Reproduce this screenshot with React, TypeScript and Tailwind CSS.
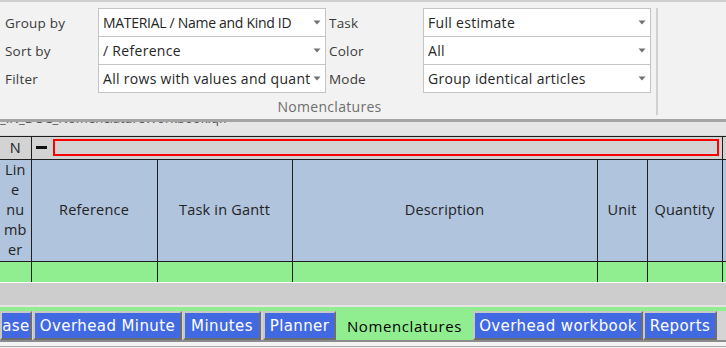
const ui = "font-['Open_Sans','Noto_Sans',sans-serif]";

function Combo({ value, tight }: { value: string; tight?: boolean }) {
  return (
    <div className="h-[29px] -mt-px first:mt-0 bg-white border border-[#c4c4c4] flex items-center pl-[4px] pr-[4px]">
      <span
        className={`flex-1 overflow-hidden whitespace-nowrap text-[14px] text-[#262626] ${
          tight ? 'tracking-[-0.3px]' : 'tracking-[0.3px]'
        }`}
      >
        {value}
      </span>
      <svg width="8" height="5" viewBox="0 0 8 5" className="ml-[3px] shrink-0">
        <path d="M0.5 0.5h7L4 4.5z" fill="#707070" />
      </svg>
    </div>
  );
}

function Label({ text }: { text: string }) {
  return (
    <div className="h-[29px] -mt-px first:mt-0 flex items-center pt-[1px] text-[13.5px] tracking-[0.2px] text-[#3a3a3a]">
      {text}
    </div>
  );
}

function Tab({ label, w, active }: { label: string; w: string; active?: boolean }) {
  if (active) {
    return (
      <div className={`${w} h-[33px] -mt-[4px] bg-[#90ee90] flex items-center justify-center pt-[5px] text-[15px] tracking-[0.6px] text-black ${ui}`}>
        {label}
      </div>
    );
  }
  return (
    <div
      className={`${w} h-[29px] bg-[#4169e1] border-2 border-t-[#c8c8c8] border-l-[#c8c8c8] border-r-[#6e6e6e] border-b-[#6e6e6e] flex items-center justify-center text-[15px] tracking-[0.4px] text-white font-['DejaVu_Sans',sans-serif] whitespace-nowrap overflow-hidden`}
    >
      {label}
    </div>
  );
}

export default function App() {
  const cell = "border border-[#1e1e1e]";
  return (
    <div className={`w-[726px] h-[348px] overflow-hidden bg-[#f2f2f2] flex flex-col ${ui}`}>
      <div className="h-[2px] bg-[#cfcfcf]" />

      {/* ribbon group */}
      <div className="h-[117px] flex">
        <div className="w-[655px] flex flex-col pt-[6px]">
          <div className="flex">
            <div className="w-[98px] pl-[5px] flex flex-col">
              <Label text="Group by" />
              <Label text="Sort by" />
              <Label text="Filter" />
            </div>
            <div className="w-[228px] flex flex-col">
              <Combo value="MATERIAL / Name and Kind ID" tight />
              <Combo value="/ Reference" />
              <Combo value="All rows with values and quantities" />
            </div>
            <div className="w-[97px] pl-[3px] flex flex-col">
              <Label text="Task" />
              <Label text="Color" />
              <Label text="Mode" />
            </div>
            <div className="w-[228px] flex flex-col">
              <Combo value="Full estimate" />
              <Combo value="All" />
              <Combo value="Group identical articles" />
            </div>
          </div>
          <div className="text-center text-[14px] tracking-[0.3px] text-[#6e6e6e] mt-[3px] pl-[4px]">Nomenclatures</div>
        </div>
        <div className="w-[2px] bg-[#d0d0d0] mt-[6px] mb-[4px] ml-[1px]" />
      </div>

      <div className="h-[3px] bg-[#a4a4a4]" />
      <div className="h-[13px] bg-[#e6e6e6] overflow-hidden">
        <div className="text-[13px] leading-[16px] -mt-[12px] text-[#555] whitespace-nowrap">
          _IN_DOC_NomenclatureWorkbook.qfr
        </div>
      </div>
      <div className="h-[1px] bg-[#d6d6d6]" />

      {/* grid */}
      <table className="table-fixed border-collapse w-[826px] text-[#222] text-[14.5px] tracking-[0.2px]">
        <colgroup>
          <col className="w-[31px]" />
          <col className="w-[126px]" />
          <col className="w-[135px]" />
          <col className="w-[305px]" />
          <col className="w-[50px]" />
          <col className="w-[75px]" />
          <col className="w-[104px]" />
        </colgroup>
        <tbody>
          <tr className="h-[21px] bg-[#d3d3d3]">
            <td className={`${cell} border-l-0 text-center p-0`}>N</td>
            <td colSpan={5} className={`${cell} p-0`}>
              <div className="flex items-center h-[19px] pr-[3px]">
                <div className="w-[11px] h-[3px] bg-[#111] ml-[4px] mr-[6px]" />
                <div className="flex-1 h-[17px] border-2 border-[#ff0000] bg-[#d3d3d3]" />
              </div>
            </td>
            <td className={`${cell} p-0`} />
          </tr>
          <tr className="h-[102px] bg-[#b0c4de]">
            <td className={`${cell} border-l-0 text-center p-0 leading-[20px]`}>
              <span className="block">Lin</span>
              <span className="block">e</span>
              <span className="block">nu</span>
              <span className="block">mb</span>
              <span className="block">er</span>
            </td>
            <td className={`${cell} text-center`}>Reference</td>
            <td className={`${cell} text-center`}>Task in Gantt</td>
            <td className={`${cell} text-center`}>Description</td>
            <td className={`${cell} text-center`}>Unit</td>
            <td className={`${cell} text-center`}>Quantity</td>
            <td className={cell} />
          </tr>
          <tr className="h-[21px] bg-[#90ee90]">
            <td className={`${cell} border-l-0 border-b-0`} />
            <td className={`${cell} border-b-0`} />
            <td className={`${cell} border-b-0`} />
            <td className={`${cell} border-b-0`} />
            <td className={`${cell} border-b-0`} />
            <td className={`${cell} border-b-0`} />
            <td className={`${cell} border-b-0`} />
          </tr>
        </tbody>
      </table>

      <div className="h-[1px] bg-white" />
      <div className="h-[22px] bg-[#cdcdcd]" />
      <div className="h-[2px] bg-[#e4e4e4]" />
      <div className="h-[4px] bg-[#90ee90]" />

      {/* sheet tabs */}
      <div className="h-[29px] flex bg-[#d4d4d4]">
        <Tab label="ase" w="w-[32px]" />
        <div className="w-[1px]" />
        <Tab label="Overhead Minute" w="w-[149px]" />
        <div className="w-[1px]" />
        <Tab label="Minutes" w="w-[78px]" />
        <div className="w-[2px]" />
        <Tab label="Planner" w="w-[73px]" />
        <Tab label="Nomenclatures" w="w-[137px]" active />
        <Tab label="Overhead workbook" w="w-[170px]" />
        <Tab label="Reports" w="w-[74px]" />
      </div>
      <div className="h-[2px] bg-[#8c8c8c]" />
      <div className="h-[4px] bg-[#f4f4f4]" />
      <div className="h-[1px] bg-[#a8a8a8]" />
      <div className="flex-1 bg-[#f2f2f2]" />
    </div>
  );
}
